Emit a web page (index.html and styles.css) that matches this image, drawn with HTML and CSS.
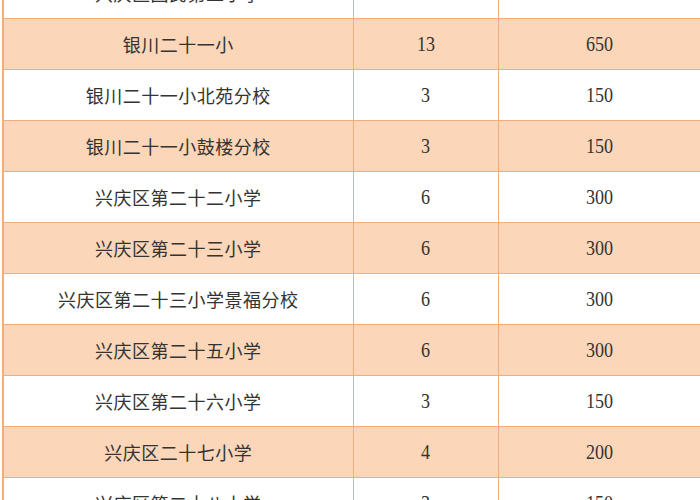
FILE: index.html
```html
<!DOCTYPE html>
<html lang="zh">
<head>
<meta charset="utf-8">
<link rel="stylesheet" href="styles.css">
</head>
<body>
<table class="grid">
  <colgroup>
    <col class="c-name">
    <col class="c-num">
    <col class="c-total">
  </colgroup>
  <tbody>
    <tr class="w"><td class="name">兴庆区回民第二小学</td><td class="num"><span>3</span></td><td class="num"><span>150</span></td></tr>
    <tr class="p"><td class="name">银川二十一小</td><td class="num"><span>13</span></td><td class="num"><span>650</span></td></tr>
    <tr class="w"><td class="name">银川二十一小北苑分校</td><td class="num"><span>3</span></td><td class="num"><span>150</span></td></tr>
    <tr class="p"><td class="name">银川二十一小鼓楼分校</td><td class="num"><span>3</span></td><td class="num"><span>150</span></td></tr>
    <tr class="w"><td class="name">兴庆区第二十二小学</td><td class="num"><span>6</span></td><td class="num"><span>300</span></td></tr>
    <tr class="p"><td class="name">兴庆区第二十三小学</td><td class="num"><span>6</span></td><td class="num"><span>300</span></td></tr>
    <tr class="w"><td class="name">兴庆区第二十三小学景福分校</td><td class="num"><span>6</span></td><td class="num"><span>300</span></td></tr>
    <tr class="p"><td class="name">兴庆区第二十五小学</td><td class="num"><span>6</span></td><td class="num"><span>300</span></td></tr>
    <tr class="w"><td class="name">兴庆区第二十六小学</td><td class="num"><span>3</span></td><td class="num"><span>150</span></td></tr>
    <tr class="p"><td class="name">兴庆区二十七小学</td><td class="num"><span>4</span></td><td class="num"><span>200</span></td></tr>
    <tr class="w"><td class="name">兴庆区第二十八小学</td><td class="num"><span>3</span></td><td class="num"><span>150</span></td></tr>
  </tbody>
</table>
</body>
</html>
```

FILE: styles.css
```css
html, body {
  margin: 0;
  padding: 0;
  background: #ffffff;
  overflow: hidden;
}

.grid {
  border-collapse: collapse;
  table-layout: fixed;
  width: 697px;
  margin: -33px 0 0 2px;
  color: #333333;
}

.c-name { width: 350px; }
.c-num { width: 145px; }
.c-total { width: 202px; }

.grid td {
  height: 50px;
  padding: 0;
  border: 1px solid #f2ad7c;
  text-align: center;
  vertical-align: middle;
}

.grid td:first-child {
  border-left: 2px solid #f2ad7c;
}

.grid tr.p td { background: #fcd6b8; }
.grid tr.w td { background: #ffffff; }

.name {
  font-family: "Noto Sans CJK SC", "Noto Sans", sans-serif;
  font-size: 18px;
  letter-spacing: 0.5px;
}

.num span {
  display: inline-block;
  font-family: "Liberation Serif", "Noto Serif", serif;
  font-size: 22px;
  transform: scaleX(0.82);
}
```
